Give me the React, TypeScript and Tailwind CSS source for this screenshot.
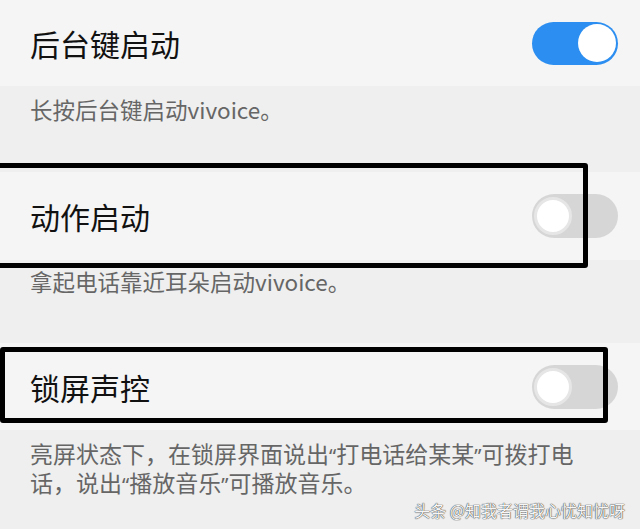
import React from "react";

// narrow curly quotes as in the screenshot
const Q = ({ children }: { children: React.ReactNode }) => (
  <span className="font-['Noto_Sans',sans-serif] text-[20px] leading-none">{children}</span>
);

function Toggle({ on }: { on: boolean }) {
  if (on) {
    return (
      <div className="flex h-[43px] w-[86px] items-center justify-end rounded-full bg-[#2b8ef0] pr-[2px]">
        <div className="h-[38px] w-[38px] rounded-full bg-white" />
      </div>
    );
  }
  return (
    <div className="flex h-[44px] w-[86px] items-center rounded-full bg-[#d6d6d6] pl-[2px]">
      <div className="h-[38px] w-[38px] rounded-full border-[3px] border-[#e6e6e6] bg-white" />
    </div>
  );
}

function Row({ title, on, h }: { title: string; on: boolean; h: string }) {
  return (
    <div className={`flex items-center justify-between bg-[#f5f5f5] pl-[30px] pr-[22px] ${h}`}>
      <span className="text-[30px] leading-none text-[#111]">{title}</span>
      <Toggle on={on} />
    </div>
  );
}

export default function App() {
  return (
    <div className="relative h-[529px] w-[640px] overflow-hidden bg-[#efefef] font-['Noto_Sans_CJK_SC',sans-serif]">
      <Row title="后台键启动" on={true} h="h-[86px]" />
      <div className="h-[86px] px-[30px] pt-[9px] text-[22.5px] leading-[29px] text-[#666]">
        长按后台键启动vivoice。
      </div>

      <Row title="动作启动" on={false} h="h-[88px]" />
      <div className="h-[83px] px-[30px] pt-[7px] text-[22.5px] leading-[29px] text-[#666]">
        拿起电话靠近耳朵启动vivoice。
      </div>

      <Row title="锁屏声控" on={false} h="h-[87px]" />
      <div className="px-[30px] pt-[9px] text-[23px] leading-[29px] text-[#666]">
        <div>
          亮屏状态下，在锁屏界面说出<Q>“</Q>打电话给某某<Q>”</Q>可拨打电
        </div>
        <div>
          话，说出<Q>“</Q>播放音乐<Q>”</Q>可播放音乐。
        </div>
      </div>

      {/* annotation boxes drawn over the screenshot */}
      <div className="absolute left-[-10px] top-[163px] h-[105px] w-[598px] rounded-[3px] border-[5px] border-black" />
      <div className="absolute left-0 top-[347px] h-[76px] w-[608px] rounded-[3px] border-[5px] border-black" />

      <div className="absolute right-[15px] top-[500px] text-[16px] leading-[20px] text-[#f6f6f6] [text-shadow:0_0_1px_#333,0_0_1px_#333]">
        头条 @知我者谓我心忧知忧呀
      </div>
    </div>
  );
}
